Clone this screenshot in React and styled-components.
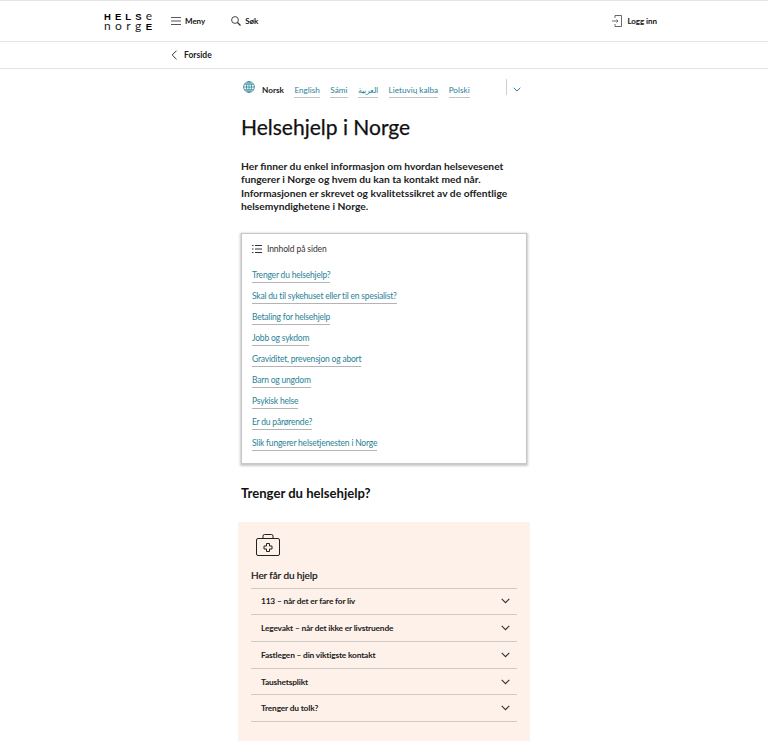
import React from 'react'
import styled, { createGlobalStyle } from 'styled-components'

const Global = createGlobalStyle`
  html, body { margin: 0; padding: 0; background: #fff; }
  body { font-family: Lato, "Noto Sans", sans-serif; color: #000; }
  a { text-decoration: none; color: inherit; }
`
const Header = styled.header`
  height: 40px;
  border-top: 1px solid #e4e4e4;
  border-bottom: 1px solid #e4e4e4;
  padding: 0 111px 0 104px;
  display: flex;
  align-items: center;
`
const Logo = styled.div`
  width: 48px;
  margin-right: 19px;
`
const LogoRow = styled.div`
  display: flex;
  justify-content: space-between;
  align-items: baseline;
  height: 10px;
  line-height: 10px;
`
const LogoBold = styled.span`
  font-family: "Liberation Sans", sans-serif;
  font-weight: 700;
  font-size: 9.5px;
`
const LogoThin = styled.span`
  font-weight: 400;
  font-size: 12px;
  color: #222;
`
const NavItem = styled.a`
  display: flex;
  align-items: center;
  gap: ${p => p.gap || 5}px;
  margin-right: ${p => p.right || 0}px;
  font-size: 8px;
  letter-spacing: -.05px;
  font-weight: 700;
  color: #111;
`
const Spacer = styled.div`
  flex: 1;
`
const Crumbs = styled.nav`
  height: 26px;
  border-bottom: 1px solid #e4e4e4;
  padding-left: 171px;
  display: flex;
  align-items: center;
  gap: 6px;
  font-size: 8.5px;
  font-weight: 700;
  color: #222;
`
const Main = styled.main`
  width: 286px;
  margin: 0 auto;
`
const Langs = styled.div`
  height: 37px;
  display: flex;
  align-items: flex-start;
  padding-top: 10px;
  box-sizing: border-box;
  font-size: 8.2px;
  white-space: nowrap;
`
const Globe = styled.svg`
  width: 12px;
  height: 12px;
  margin: 2px 7px 0 2px;
`
const Current = styled.span`
  font-weight: 700;
  color: #222;
  margin: 6px 10.5px 0 0;
`
const Lang = styled.a`
  color: #2a8298;
  margin: 6px 10.5px 0 0;
  border-bottom: 1px solid #c4c4c4;
  height: 12px;
  line-height: 11px;
`
const LangMore = styled.div`
  border-left: 1px solid #cfcfcf;
  height: 16px;
  margin: 0 6px 0 auto;
  padding: 5px 0 0 6px;
  box-sizing: border-box;
`
const Title = styled.h1`
  margin: 7px 0 0;
  font-size: 21px;
  line-height: 28px;
  font-weight: 400;
  -webkit-text-stroke: .25px currentColor;
  color: #111;
`
const Lead = styled.p`
  margin: 19px 0 0;
  font-size: 10.25px;
  line-height: 13.4px;
  font-weight: 700;
  color: #222;
`
const Toc = styled.section`
  margin-top: 19px;
  height: 231px;
  box-sizing: border-box;
  border: 1px solid #c8c8c8;
  box-shadow: 0 1px 2px 1px rgba(0,0,0,.22);
  padding: 9px 10px;
`
const TocHead = styled.div`
  display: flex;
  align-items: center;
  gap: 5px;
  height: 12px;
  font-size: 8.5px;
  letter-spacing: -.1px;
  color: #333;
  margin-bottom: 14px;
`
const TocList = styled.ul`
  list-style: none;
  margin: 0;
  padding: 0;
  display: flex;
  flex-direction: column;
  gap: 7px;
  align-items: flex-start;
`
const TocLink = styled.a`
  display: block;
  height: 13px;
  line-height: 12px;
  font-size: 8.5px;
  letter-spacing: -.2px;
  color: #2a8298;
  border-bottom: 1px solid #b4b4b4;
`
const Section = styled.h2`
  margin: 19px 0 0;
  font-size: 13.1px;
  line-height: 20px;
  font-weight: 700;
  color: #111;
`
const Card = styled.section`
  margin: 19px -3px 0;
  height: 219px;
  box-sizing: border-box;
  background: #fdf1ea;
  padding: 11px 13px 0;
`
const CardIcon = styled.svg`
  display: block;
  width: 26px;
  height: 24px;
  margin-left: 4px;
`
const CardTitle = styled.h3`
  margin: 9px 0 0;
  height: 18px;
  font-size: 10px;
  letter-spacing: -.1px;
  line-height: 18px;
  font-weight: 400;
  -webkit-text-stroke: .2px currentColor;
  color: #111;
`
const Accordion = styled.div`
  margin-top: 4px;
  border-top: 1px solid #cfc8c3;
`
const Row = styled.div`
  height: 25.7px;
  box-sizing: content-box;
  border-bottom: 1px solid #cfc8c3;
  display: flex;
  align-items: center;
  justify-content: space-between;
  padding: 0 7px 0 10px;
  font-size: 8.4px;
  letter-spacing: -.18px;
  font-weight: 700;
  color: #222;
`

const Chevron = ({ color = '#333', width = 9 }) => (
  <svg width={width} height={width * 2 / 3} viewBox="0 0 9 6" fill="none" stroke={color} strokeWidth="1.1"><path d="M.7.8 4.5 4.6 8.3.8" /></svg>
)

const links = [
  'Trenger du helsehjelp?',
  'Skal du til sykehuset eller til en spesialist?',
  'Betaling for helsehjelp',
  'Jobb og sykdom',
  'Graviditet, prevensjon og abort',
  'Barn og ungdom',
  'Psykisk helse',
  'Er du pårørende?',
  'Slik fungerer helsetjenesten i Norge',
]
const rows = [
  '113 – når det er fare for liv',
  'Legevakt – når det ikke er livstruende',
  'Fastlegen – din viktigste kontakt',
  'Taushetsplikt',
  'Trenger du tolk?',
]

export default function App() {
  return (
    <>
      <Global />
      <Header>
        <Logo>
          <LogoRow><LogoBold>H</LogoBold><LogoBold>E</LogoBold><LogoBold>L</LogoBold><LogoBold>S</LogoBold><LogoThin>e</LogoThin></LogoRow>
          <LogoRow><LogoThin>n</LogoThin><LogoThin>o</LogoThin><LogoThin>r</LogoThin><LogoThin>g</LogoThin><LogoBold>E</LogoBold></LogoRow>
        </Logo>
        <NavItem right={26} gap={4}>
          <svg width="10" height="8" viewBox="0 0 10 8" stroke="#555" strokeWidth="1"><path d="M0 .5h10M0 4h10M0 7.5h10" /></svg>
          Meny
        </NavItem>
        <NavItem gap={4}>
          <svg width="10" height="10" viewBox="0 0 10 10" fill="none" stroke="#333" strokeWidth=".9"><circle cx="4" cy="4" r="3.4" /><path d="m6.5 6.5 3 3" strokeWidth="1.3" /></svg>
          Søk
        </NavItem>
        <Spacer />
        <NavItem gap={5}>
          <svg width="10" height="12" viewBox="0 0 10 12" fill="none" stroke="#444" strokeWidth=".8"><path d="M3 3V.5h6.5v11H3V9M0 6h6M4.5 4.5 6 6 4.5 7.5" /></svg>
          Logg inn
        </NavItem>
      </Header>
      <Crumbs>
        <svg width="7" height="10" viewBox="0 0 7 10" fill="none" stroke="#333" strokeWidth="1"><path d="M5.5.7 1.2 5l4.3 4.3" /></svg>
        Forside
      </Crumbs>
      <Main>
        <Langs>
          <Globe viewBox="0 0 12 12" fill="none" stroke="#2a8298" strokeWidth=".8">
            <circle cx="6" cy="6" r="5.4" /><ellipse cx="6" cy="6" rx="2.5" ry="5.4" /><path d="M.6 6h10.8M1.4 3.2h9.2M1.4 8.8h9.2M6 .6v10.8" />
          </Globe>
          <Current>Norsk</Current>
          <Lang>English</Lang>
          <Lang>Sámi</Lang>
          <Lang>العربية</Lang>
          <Lang>Lietuvių kalba</Lang>
          <Lang>Polski</Lang>
          <LangMore><Chevron color="#2a8298" width={8} /></LangMore>
        </Langs>
        <Title>Helsehjelp i Norge</Title>
        <Lead>Her finner du enkel informasjon om hvordan helsevesenet fungerer i Norge og hvem du kan ta kontakt med når. Informasjonen er skrevet og kvalitetssikret av de offentlige helsemyndighetene i Norge.</Lead>
        <Toc>
          <TocHead>
            <svg width="10" height="8" viewBox="0 0 10 8" stroke="#333" strokeWidth="1"><path d="M0 .5h1.5M3 .5h7M0 4h1.5M3 4h7M0 7.5h1.5M3 7.5h7" /></svg>
            Innhold på siden
          </TocHead>
          <TocList>
            {links.map(l => <li key={l}><TocLink>{l}</TocLink></li>)}
          </TocList>
        </Toc>
        <Section>Trenger du helsehjelp?</Section>
        <Card>
          <CardIcon viewBox="0 0 26 24" fill="none" stroke="#222" strokeWidth="1">
            <rect x="1.5" y="5.5" width="23" height="17" rx="1.5" />
            <path d="M8 5.5V3a1.5 1.5 0 0 1 1.5-1.5h7A1.5 1.5 0 0 1 18 3v2.5" />
            <path d="M11.5 10.5h3v2.5H17v3h-2.5v2.5h-3V16H9v-3h2.5z" />
          </CardIcon>
          <CardTitle>Her får du hjelp</CardTitle>
          <Accordion>
            {rows.map(r => <Row key={r}>{r}<Chevron /></Row>)}
          </Accordion>
        </Card>
      </Main>
    </>
  )
}
